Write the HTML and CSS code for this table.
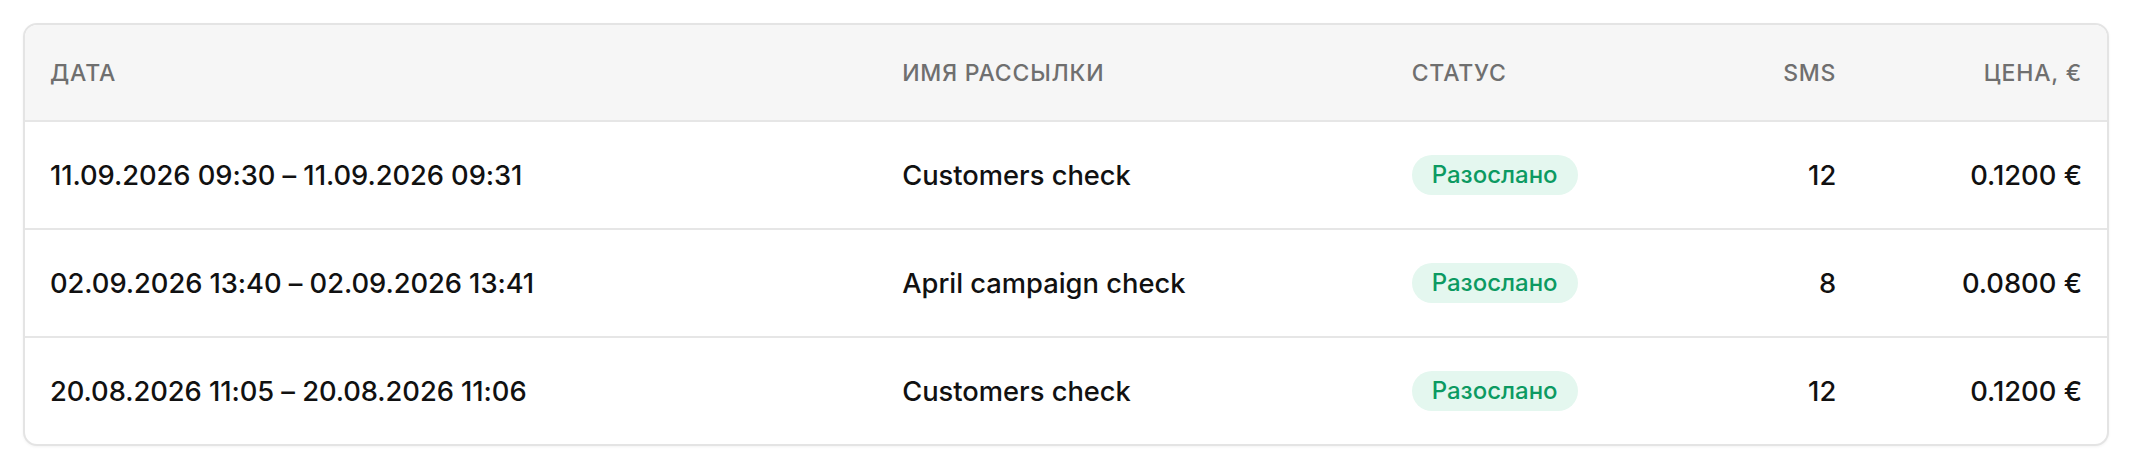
FILE: index.html
```html
<!DOCTYPE html>
<html lang="ru">
<head>
<meta charset="utf-8">
<title>Рассылки</title>
<link rel="stylesheet" href="styles.css">
</head>
<body>
<div class="card">
  <div class="row head">
    <div class="cell">Дата</div>
    <div class="cell">Имя рассылки</div>
    <div class="cell">Статус</div>
    <div class="cell num">SMS</div>
    <div class="cell num">Цена, €</div>
  </div>
  <div class="row">
    <div class="cell date">11.09.2026 09:30 – 11.09.2026 09:31</div>
    <div class="cell">Customers check</div>
    <div class="cell"><span class="badge">Разослано</span></div>
    <div class="cell num">12</div>
    <div class="cell num">0.1200 €</div>
  </div>
  <div class="row">
    <div class="cell date">02.09.2026 13:40 – 02.09.2026 13:41</div>
    <div class="cell">April campaign check</div>
    <div class="cell"><span class="badge">Разослано</span></div>
    <div class="cell num">8</div>
    <div class="cell num">0.0800 €</div>
  </div>
  <div class="row">
    <div class="cell date">20.08.2026 11:05 – 20.08.2026 11:06</div>
    <div class="cell">Customers check</div>
    <div class="cell"><span class="badge">Разослано</span></div>
    <div class="cell num">12</div>
    <div class="cell num">0.1200 €</div>
  </div>
</div>
</body>
</html>
```

FILE: styles.css
```css
* { box-sizing: border-box; }

html, body {
  margin: 0;
  background: #ffffff;
}

body {
  padding: 23px;
  font-family: Inter, "Liberation Sans", sans-serif;
  color: #111111;
}

.card {
  border: 2px solid #e4e4e4;
  border-radius: 14px;
  overflow: hidden;
  background: #ffffff;
  box-shadow: 0 1px 3px rgba(0, 0, 0, 0.05);
}

.row {
  display: grid;
  grid-template-columns: 853fr 510fr 273fr 202fr 246fr;
  align-items: center;
  height: 108px;
  border-top: 2px solid #e6e6e6;
  font-size: 27.3px;
  font-weight: 500;
  letter-spacing: 0;
}

.row.head {
  height: 95px;
  border-top: none;
  background: #f6f6f6;
  font-size: 23px;
  font-weight: 500;
  color: #6f6f6f;
  text-transform: uppercase;
  letter-spacing: 0.8px;
}

.cell {
  padding: 0 25px;
  white-space: nowrap;
}

.cell.date {
  letter-spacing: -0.05px;
}

.cell.num {
  text-align: right;
}

.badge {
  display: inline-block;
  height: 40px;
  line-height: 40px;
  padding: 0 20px;
  border-radius: 20px;
  background: #e4f7ef;
  color: #0c9a62;
  font-size: 24px;
  font-weight: 500;
  letter-spacing: 0;
}
```
